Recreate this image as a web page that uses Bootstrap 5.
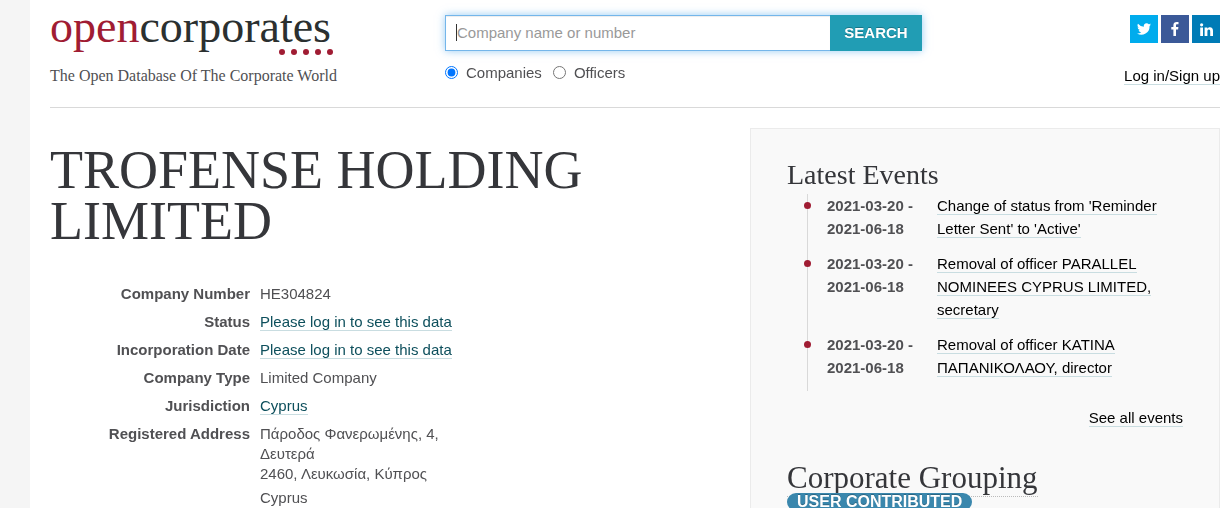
<!DOCTYPE html>
<html lang="en">
<head>
<meta charset="utf-8">
<meta name="viewport" content="width=device-width, initial-scale=1">
<title>TROFENSE HOLDING LIMITED :: OpenCorporates</title>
<link href="https://cdn.jsdelivr.net/npm/bootstrap@5.3.0/dist/css/bootstrap.min.css" rel="stylesheet">
<style>
body { background: #f5f5f5; color: #505053; font: 15px/20px "Liberation Sans", Arial, sans-serif; }
.page { background: #fff; margin-left: 30px; padding: 0 4px 0 20px; min-height: 100vh; overflow: hidden; }
.serif { font-family: "Liberation Serif", "Times New Roman", serif; font-weight: 400; color: #35363a; }
.site-head { border-bottom: 1px solid #d9d9d9; min-height: 108px; }
.brand-col { flex: 0 0 395px; }
.logo { display: inline-block; font-size: 46px; line-height: 46px; color: #2b3030; margin-top: 4px; text-decoration: none; }
.logo .open { color: #a01c33; }
.logo-dots { position: absolute; right: -2px; bottom: -5px; }
.tagline { font-size: 16px; line-height: 20px; color: #505053; margin-top: 16px; }
.search-col { flex: 0 1 477px; padding-top: 15px; }
.search-box { box-shadow: 0 0 8px rgba(82,168,236,.6); }
.search-box input { height: 36px; padding: 0 10px 2px 11px; border: 1px solid #74b6ea; border-right: 0; border-radius: 0; font-size: 15px; color: #505053; min-width: 0; box-shadow: inset 0 1px 1px rgba(0,0,0,.075); outline: 0; caret-color: transparent; }
.search-box input:placeholder-shown:focus { background: linear-gradient(#333, #333) 10px 8px / 1px 17px no-repeat #fff; }
.search-box input::placeholder { color: #999; }
.search-box button { width: 92px; border: 0; background: #219db4; color: #fff; font-weight: 700; padding: 0; text-shadow: 0 -1px 0 rgba(0,0,0,.25); }
.kinds { margin-top: 12px; }
.kinds input { margin: 0 8px 2px 0; width: 13px; height: 13px; }
.kinds label { margin-right: 11px; }
.account { margin-top: 23px; }
.socials { gap: 3px; padding-top: 15px; }
.social { width: 28px; height: 28px; }
.tw { background: #00aced; } .fb { background: #3b5998; } .li { background: #007bb6; }
.oc-link { color: #0d4f5c; text-decoration: none; box-shadow: 0 1px 0 #c9dde1; }
.oc-dark { color: #000; }
.main-col { min-width: 0; }
.side-col { flex: 0 0 470px; background: #f9f9f9; border: 1px solid #ebebeb; margin-top: 20px; padding: 28px 36px 36px; }
h1.serif { font-size: 54px; line-height: 51px; margin: 37px 0 37px; max-width: 600px; }
.facts { display: grid; grid-template-columns: 200px 1fr; gap: 8px 10px; margin: 0; }
.facts dt { text-align: right; font-weight: 700; }
.facts dd { margin: 0; }
.events-title { font-size: 28px; line-height: 36px; margin: 0; }
.grouping-title { font-size: 31px; line-height: 36px; border-bottom: 1px dotted #bbb; height: 37px; }
.timeline { margin: 1px 0 0 20px; border-left: 1px solid #d9d9d9; line-height: 23px; padding-bottom: 12px; gap: 12px; }
.timeline li { padding-left: 19px; }
.timeline li::before { content: ""; position: absolute; left: -4px; top: 8px; width: 7px; height: 7px; border-radius: 50%; background: #a01c33; }
.event-date { flex: 0 0 110px; padding-right: 20px; font-weight: 700; }
.see-all { margin: 17px 0 32px; }
.contributed { background: #3a87ad; color: #fff; font-weight: 700; font-size: 16px; line-height: 18px; border-radius: 9px; padding: 0 10px; text-shadow: 0 -1px 0 rgba(0,0,0,.25); margin-top: -4px; }
</style>
</head>
<body>
<div class="page">
  <header class="site-head d-flex align-items-start">
    <div class="brand-col">
      <a href="#" class="logo serif position-relative"><span class="open">open</span>corporates<svg class="logo-dots" width="54" height="6" viewBox="0 0 54 6" aria-hidden="true"><g fill="#a01c33"><circle cx="3" cy="3" r="3"/><circle cx="15" cy="3" r="3"/><circle cx="27" cy="3" r="3"/><circle cx="39" cy="3" r="3"/><circle cx="51" cy="3" r="3"/></g></svg></a>
      <div class="serif tagline">The Open Database Of The Corporate World</div>
    </div>
    <form class="search-col" onsubmit="return false">
      <div class="search-box d-flex">
        <input type="text" class="flex-grow-1" placeholder="Company name or number" aria-label="Company name or number" autofocus>
        <button type="submit">SEARCH</button>
      </div>
      <div class="kinds d-flex align-items-center">
        <input type="radio" name="kind" id="kind-companies" checked><label for="kind-companies">Companies</label>
        <input type="radio" name="kind" id="kind-officers"><label for="kind-officers">Officers</label>
      </div>
    </form>
    <div class="ms-auto text-end">
      <div class="socials d-flex justify-content-end">
        <a href="#" class="social tw d-flex align-items-center justify-content-center" aria-label="Twitter"><svg width="14" height="12" viewBox="0 0 24 20" fill="#fff"><path d="M24 2.400a10 10 0 0 1-2.800.8A5 5 0 0 0 23.300.500a10 10 0 0 1-3.100 1.200A4.900 4.900 0 0 0 11.800 6.200 14 14 0 0 1 1.700 1a5 5 0 0 0 1.500 6.600A5 5 0 0 1 1 7a5 5 0 0 0 3.900 4.900 5 5 0 0 1-2.200.1A5 5 0 0 0 7.300 15.400 10 10 0 0 1 0 17.500 14 14 0 0 0 21.500 4.900 10 10 0 0 0 24 2.400z"/></svg></a>
        <a href="#" class="social fb d-flex align-items-center justify-content-center" aria-label="Facebook"><svg width="8" height="14" viewBox="0 0 8 14" fill="#fff"><path d="M7.500.1v2.200H6.200c-1 0-1.200.5-1.200 1.200v1.400h2.400L7.100 7.400H5V14H2.400V7.400H.3V4.900h2.100V3.100C2.400 1.100 3.700 0 5.600 0z"/></svg></a>
        <a href="#" class="social li d-flex align-items-center justify-content-center" aria-label="LinkedIn"><svg width="13" height="13" viewBox="0 0 13 13" fill="#fff"><circle cx="1.600" cy="1.800" r="1.600"/><path d="M.2 4.500H3V13H.2zM4.600 4.500h2.800v1.200C7.800 5 8.600 4.300 10 4.300c1.900 0 3 1.300 3 3.700v5h-2.800V8.400c0-1.200-.4-1.900-1.400-1.900S7.400 7.300 7.400 8.400V13H4.600z"/></svg></a>
      </div>
      <div class="account"><a href="#" class="oc-link oc-dark">Log in/Sign up</a></div>
    </div>
  </header>

  <div class="d-flex align-items-start">
    <main class="main-col flex-grow-1">
      <h1 class="serif">TROFENSE HOLDING LIMITED</h1>
      <dl class="facts">
        <dt>Company Number</dt><dd>HE304824</dd>
        <dt>Status</dt><dd><a href="#" class="oc-link">Please log in to see this data</a></dd>
        <dt>Incorporation Date</dt><dd><a href="#" class="oc-link">Please log in to see this data</a></dd>
        <dt>Company Type</dt><dd>Limited Company</dd>
        <dt>Jurisdiction</dt><dd><a href="#" class="oc-link">Cyprus</a></dd>
        <dt>Registered Address</dt>
        <dd>
          <div class="mb-1">Πάροδος Φανερωμένης, 4,<br>Δευτερά<br>2460, Λευκωσία, Κύπρος</div>
          <div>Cyprus</div>
        </dd>
      </dl>
    </main>
    <aside class="side-col">
      <h2 class="serif events-title">Latest Events</h2>
      <ul class="timeline list-unstyled d-flex flex-column">
        <li class="d-flex position-relative"><span class="event-date">2021-03-20 - 2021-06-18</span><span><a href="#" class="oc-link oc-dark">Change of status from 'Reminder Letter Sent' to 'Active'</a></span></li>
        <li class="d-flex position-relative"><span class="event-date">2021-03-20 - 2021-06-18</span><span><a href="#" class="oc-link oc-dark">Removal of officer PARALLEL NOMINEES CYPRUS LIMITED, secretary</a></span></li>
        <li class="d-flex position-relative"><span class="event-date">2021-03-20 - 2021-06-18</span><span><a href="#" class="oc-link oc-dark">Removal of officer ΚΑΤΙΝΑ ΠΑΠΑΝΙΚΟΛΑΟΥ, director</a></span></li>
      </ul>
      <div class="see-all text-end"><a href="#" class="oc-link oc-dark">See all events</a></div>
      <div class="d-flex flex-column align-items-start">
        <h2 class="serif grouping-title m-0">Corporate Grouping</h2>
        <span class="contributed position-relative">USER CONTRIBUTED</span>
      </div>
    </aside>
  </div>
</div>
<script src="https://cdn.jsdelivr.net/npm/bootstrap@5.3.0/dist/js/bootstrap.bundle.min.js"></script>
</body>
</html>
